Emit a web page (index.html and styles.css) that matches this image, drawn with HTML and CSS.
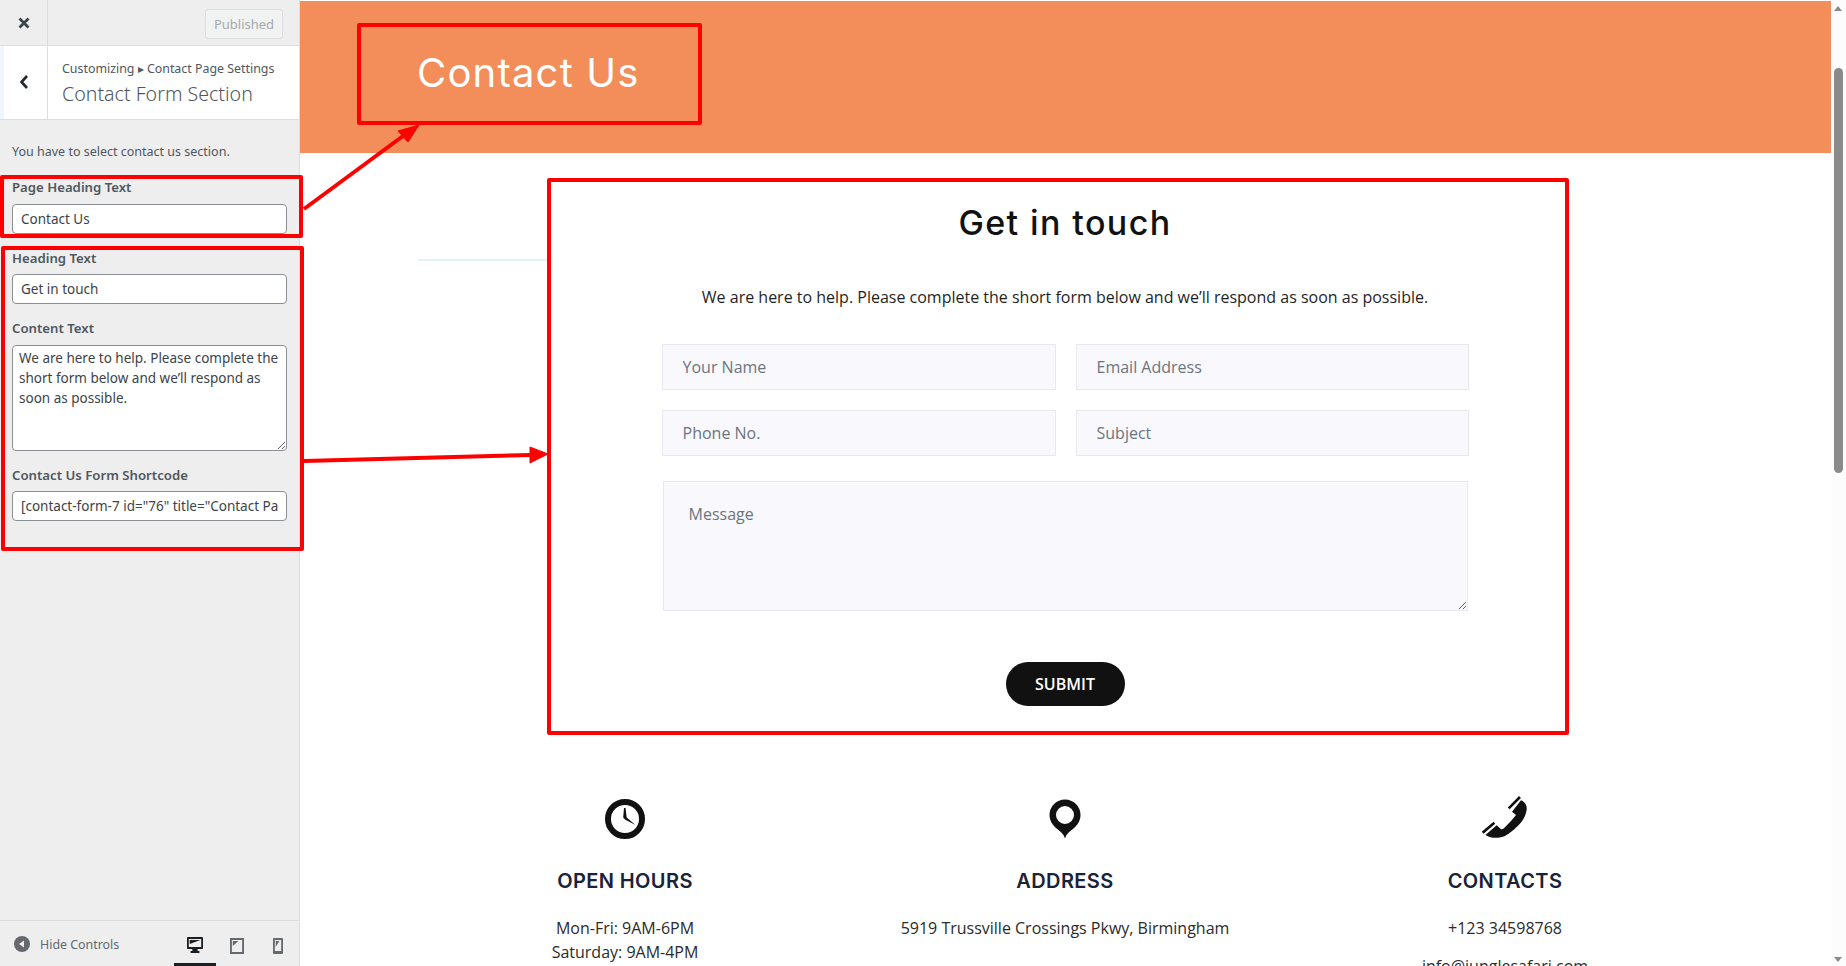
FILE: index.html
```html
<!DOCTYPE html>
<html>

<head>
    <title>Contact Form Section</title>
    <meta charset='UTF-8'>
    <link rel="stylesheet" href="styles.css">
</head>

<body>
    <aside class="sidebar">
        <div class="topbar">
            <div class="close-btn">
                <svg width="14" height="14" viewBox="0 0 14 14">
                    <path d="M2.5 2.5l9 9M11.5 2.5l-9 9" stroke="#3c434a" stroke-width="2.8" />
                </svg>
            </div>
            <div class="published">Published</div>
        </div>
        <div class="section-title">
            <div class="back-btn">
                <svg width="12" height="16" viewBox="0 0 12 16">
                    <path d="M9 2L3.5 8 9 14" fill="none" stroke="#23282d" stroke-width="2.6" />
                </svg>
            </div>
            <div class="crumbs">
                <div class="crumb-top">Customizing ▸ Contact Page Settings</div>
                <div class="crumb-main">Contact Form Section</div>
            </div>
        </div>
        <p class="desc">You have to select contact us section.</p>
        <div class="group group-one">
            <label class="field-label">Page Heading Text</label>
            <input class="field" type="text" value="Contact Us">
        </div>
        <div class="group group-two">
            <label class="field-label">Heading Text</label>
            <input class="field" type="text" value="Get in touch">
            <label class="field-label">Content Text</label>
            <textarea class="field area">We are here to help. Please complete the short form below and we’ll respond as soon as possible.</textarea>
            <label class="field-label">Contact Us Form Shortcode</label>
            <input class="field" type="text" value='[contact-form-7 id="76" title="Contact Page Form"]'>
        </div>
        <div class="footer">
            <div class="hide-controls">
                <svg width="16" height="16" viewBox="0 0 16 16">
                    <circle cx="8" cy="8" r="8" fill="#646970" />
                    <path d="M10 4.5v7L5 8z" fill="#eee" />
                </svg>
                <span>Hide Controls</span>
            </div>
            <div class="devices">
                <div class="device active">
                    <svg width="16" height="16" viewBox="0 0 18 16" preserveAspectRatio="none">
                        <path fill-rule="evenodd" d="M1 0h16a1 1 0 0 1 1 1v10a1 1 0 0 1-1 1h-5v2h2v2H4v-2h2v-2H1a1 1 0 0 1-1-1V1a1 1 0 0 1 1-1zm1 2v8h14V2z" fill="#191e23" />
                        <path d="M3 3h12L3 7z" fill="#191e23" />
                    </svg>
                </div>
                <div class="device">
                    <svg width="14" height="16" viewBox="0 0 15 16" preserveAspectRatio="none">
                        <path fill-rule="evenodd" d="M0 0h15v16H0zm2 2v12h11V2z" fill="#646970" />
                        <path d="M3 3h6L3 8z" fill="#646970" />
                    </svg>
                </div>
                <div class="device">
                    <svg width="10" height="16" viewBox="0 0 11 16" preserveAspectRatio="none">
                        <path fill-rule="evenodd" d="M1 0h9a1 1 0 0 1 1 1v14a1 1 0 0 1-1 1H1a1 1 0 0 1-1-1V1a1 1 0 0 1 1-1zm1 2v11h7V2z" fill="#646970" />
                        <path d="M3 3h4L3 9z" fill="#646970" />
                    </svg>
                </div>
            </div>
        </div>
    </aside>

    <main class="preview">
        <div class="banner">
            <h1 class="banner-title">Contact Us</h1>
        </div>
        <div class="faint-line"></div>
        <section class="form-card">
            <h2 class="form-heading">Get in touch</h2>
            <p class="form-intro">We are here to help. Please complete the short form below and we’ll respond as soon as possible.</p>
            <div class="form-grid">
                <input class="form-input" type="text" placeholder="Your Name">
                <input class="form-input" type="text" placeholder="Email Address">
                <input class="form-input" type="text" placeholder="Phone No.">
                <input class="form-input" type="text" placeholder="Subject">
            </div>
            <textarea class="form-message" placeholder="Message"></textarea>
            <button class="submit-btn">SUBMIT</button>
        </section>
        <section class="info-row">
            <div class="info-col">
                <svg class="info-icon" width="44" height="46" viewBox="0 0 44 46">
                    <circle cx="22" cy="23" r="17" fill="none" stroke="#111" stroke-width="6" />
                    <path d="M21 12l1.500 0 1.200 9.500 8.800 7.500-10.500-5.500-1.800-2z" fill="#111" />
                </svg>
                <h3 class="info-title">OPEN HOURS</h3>
                <p class="info-text">Mon-Fri: 9AM-6PM<br>Saturday: 9AM-4PM</p>
            </div>
            <div class="info-col">
                <svg class="info-icon" width="44" height="46" viewBox="0 0 44 46">
                    <path fill-rule="evenodd" d="M22 3.500a15.500 15.500 0 0 1 15.500 15.500c0 7-4.500 11.500-9.500 15.500-2.500 2-4.800 4-6 8-1.200-4-3.500-6-6-8-5-4-9.500-8.500-9.500-15.500A15.500 15.500 0 0 1 22 3.500zm0 6.500a9 9 0 1 0 0 18 9 9 0 0 0 0-18z" fill="#111" />
                </svg>
                <h3 class="info-title">ADDRESS</h3>
                <p class="info-text">5919 Trussville Crossings Pkwy, Birmingham</p>
            </div>
            <div class="info-col">
                <svg class="info-icon" width="46" height="46" viewBox="0 0 46 46">
                    <path d="M26.700 12.300L38 1M.7 36.700L12.400 26.700" stroke="#111" stroke-width="2.600" fill="none" />
                    <path d="M30 15.700L39 4.300C43 6 45 9 44.700 13 44.500 18 41 25 37.400 28.300 33 33 28 37 25.700 38.300 22 41 18 41.700 15.700 41.700 12 42 7 41.500 3.400 39L14.700 29.300 19 33.300C20 33.500 21 32.700 22.400 31.700L29 25 34 19z" fill="#111" />
                </svg>
                <h3 class="info-title">CONTACTS</h3>
                <p class="info-text">+123 34598768</p>
                <p class="info-text info-gap">info@junglesafari.com</p>
            </div>
        </section>
    </main>

    <div class="scrollbar">
        <div class="scroll-up"></div>
        <div class="scroll-thumb"></div>
        <div class="scroll-down"></div>
    </div>

    <!-- red arrows drawn over the screenshot -->
    <svg class="callouts" width="1846" height="966" viewBox="0 0 1846 966">
        <path d="M304 209L403 136" stroke="#f00" stroke-width="4" />
        <path d="M419 125L398 131 408 142z" fill="#f00" stroke="#f00" />
        <path d="M304 461L531 455" stroke="#f00" stroke-width="4" />
        <path d="M548 454L530 447 530 463z" fill="#f00" stroke="#f00" />
    </svg>
</body>

</html>
```

FILE: styles.css
```css
* {
    box-sizing: border-box;
}

html,
body {
    height: 100%;
}

body {
    margin: 0;
    display: flex;
    overflow: hidden;
    background-color: #fff;
    font-family: "Open Sans", sans-serif;
    color: #2b2b2b;
}

/* customizer sidebar */
.sidebar {
    width: 300px;
    height: 966px;
    flex-shrink: 0;
    display: flex;
    flex-direction: column;
    background-color: #eee;
    border-right: 1px solid #ddd;
    font-family: "Noto Sans", sans-serif;
    font-size: 13px;
    color: #50575e;
}

.topbar {
    height: 46px;
    display: flex;
    align-items: center;
    justify-content: space-between;
    border-bottom: 1px solid #ddd;
    padding-right: 16px;
}

.close-btn {
    width: 48px;
    height: 45px;
    display: flex;
    align-items: center;
    justify-content: center;
    border-right: 1px solid #ddd;
}

.published {
    width: 78px;
    height: 30px;
    display: flex;
    align-items: center;
    justify-content: center;
    background-color: #f1f2f2;
    border: 1px solid #dcdcde;
    border-radius: 3px;
    color: #a7aaad;
    margin-top: 2px;
}

.section-title {
    height: 74px;
    display: flex;
    background-color: #fff;
    border-bottom: 1px solid #ddd;
}

.back-btn {
    width: 48px;
    display: flex;
    align-items: center;
    justify-content: center;
    border-left: 4px solid #f0f6fc;
    border-right: 1px solid #ddd;
    padding: 0 4px 1px 0;
}

.crumbs {
    padding: 14px 0 0 14px;
}

.crumb-top {
    font-size: 12.4px;
    line-height: 18px;
}

.crumb-main {
    font-size: 19.6px;
    font-weight: 300;
    line-height: 28px;
    margin-top: 2px;
    color: #50575e;
}

.desc {
    margin: 0;
    padding: 23px 0 0 12px;
    height: 55px;
    font-size: 12.5px;
    line-height: 18px;
}

.group {
    display: flex;
    flex-direction: column;
    border: 4px solid #f00;
    border-radius: 2px;
    padding-left: 8px;
}

.group-one {
    width: 303px;
    height: 63px;
}

.group-two {
    width: 303px;
    height: 305px;
    margin: 8px 0 0 1px;
    padding-left: 7px;
}

.field-label {
    font-weight: 600;
    font-size: 13.2px;
    line-height: 18px;
    margin-bottom: 7px;
    color: #50575e;
}

.field-label:first-child {
    margin-top: -1px;
}

.field {
    width: 275px;
    height: 30px;
    flex-shrink: 0;
    padding: 0 8px;
    margin-bottom: 15px;
    background-color: #fff;
    border: 1px solid #8c8f94;
    border-radius: 4px;
    font-family: "Noto Sans", sans-serif;
    font-size: 13.5px;
    color: #3c434a;
}

.area {
    height: 106px;
    margin-top: 1px;
    padding: 2px 6px;
    line-height: 20px;
    resize: vertical;
}

.group-one .field-label {
    margin-bottom: 8px;
}

.footer {
    margin-top: auto;
    height: 46px;
    display: flex;
    justify-content: space-between;
    border-top: 1px solid #ddd;
    padding-left: 14px;
}

.hide-controls {
    display: flex;
    align-items: center;
    gap: 10px;
    padding-top: 1px;
    font-size: 12.4px;
    color: #646970;
}

.devices {
    display: flex;
    margin-right: 1px;
}

.device {
    width: 41px;
    height: 45px;
    display: flex;
    align-items: center;
    justify-content: center;
    padding-top: 4px;
}

.device.active {
    width: 42px;
    border-bottom: 3px solid #191e23;
    padding-top: 6px;
}

/* site preview */
.preview {
    position: relative;
    width: 1531px;
    height: 966px;
    flex-shrink: 0;
    overflow: hidden;
}

.banner {
    height: 152px;
    margin-top: 1px;
    padding: 22px 0 0 57px;
    background-color: #f38e5a;
}

.banner-title {
    width: 345px;
    height: 102px;
    margin: 0;
    padding: 0 0 4px 56px;
    display: flex;
    align-items: center;
    border: 4px solid #f00;
    border-radius: 2px;
    font-family: "Inter", sans-serif;
    font-weight: 400;
    font-size: 40px;
    letter-spacing: 1.2px;
    color: #fff;
}

.faint-line {
    position: absolute;
    left: 118px;
    top: 259px;
    width: 130px;
    height: 2px;
    background-color: #e3f3f3;
}

.form-card {
    width: 1022px;
    height: 557px;
    margin: 25px 0 0 247px;
    padding: 0 0 0 14px;
    position: relative;
    display: flex;
    flex-direction: column;
    align-items: center;
    background-color: #fff;
    border: 4px solid #f00;
    border-radius: 2px;
}

.form-heading {
    margin: 19px 0 0;
    font-family: "Inter", sans-serif;
    font-weight: 500;
    font-size: 34px;
    letter-spacing: 1.4px;
    line-height: 44px;
    color: #111;
}

.form-intro {
    margin: 39px 0 0;
    font-size: 16px;
    line-height: 26px;
    color: #1f1f1f;
}

.form-grid {
    width: 807px;
    margin-top: 34px;
    display: grid;
    grid-template-columns: 394px 393px;
    gap: 20px;
}

.form-input,
.form-message {
    background-color: #f8f8fd;
    border: 1px solid #e9e8f1;
    font-family: "Open Sans", sans-serif;
    font-size: 16px;
    color: #6c757d;
}

.form-input {
    height: 46px;
    padding: 0 20px;
}

.form-message {
    display: block;
    width: 805px;
    height: 130px;
    margin-top: 25px;
    padding: 20px 25px;
    line-height: 24px;
}

.form-input::placeholder,
.form-message::placeholder {
    color: #6c757d;
    opacity: 1;
}

.submit-btn {
    width: 119px;
    height: 44px;
    margin-top: 51px;
    background-color: #111;
    border: none;
    border-radius: 22px;
    font-family: "Open Sans", sans-serif;
    font-weight: 600;
    font-size: 16px;
    color: #fff;
}

.info-row {
    width: 1320px;
    margin: 61px 0 0 105px;
    display: grid;
    grid-template-columns: repeat(3, 440px);
}

.info-col {
    display: flex;
    flex-direction: column;
    align-items: center;
}

.info-icon {
    display: block;
}

.info-title {
    margin: 26px 0 0;
    font-family: "Inter", sans-serif;
    font-weight: 600;
    font-size: 20px;
    letter-spacing: .4px;
    line-height: 26px;
    color: #1a2238;
}

.info-text {
    margin: 22px 0 0;
    font-size: 16px;
    line-height: 24px;
    text-align: center;
    color: #2b2b2b;
}

.info-gap {
    margin-top: 14px;
}

/* scrollbar */
.scrollbar {
    position: relative;
    flex: 1;
    background-color: #fcfcfc;
}

.scroll-up,
.scroll-down {
    position: absolute;
    left: 3px;
    width: 0;
    height: 0;
    border-left: 4.5px solid transparent;
    border-right: 4.5px solid transparent;
}

.scroll-up {
    top: 6px;
    border-bottom: 5px solid #8a8a8a;
}

.scroll-down {
    bottom: 4px;
    border-top: 5px solid #8a8a8a;
}

.scroll-thumb {
    position: absolute;
    left: 3px;
    top: 68px;
    width: 9px;
    height: 405px;
    border-radius: 5px;
    background-color: #8a8a8a;
}

.callouts {
    position: absolute;
    left: 0;
    top: 0;
    pointer-events: none;
}
```
